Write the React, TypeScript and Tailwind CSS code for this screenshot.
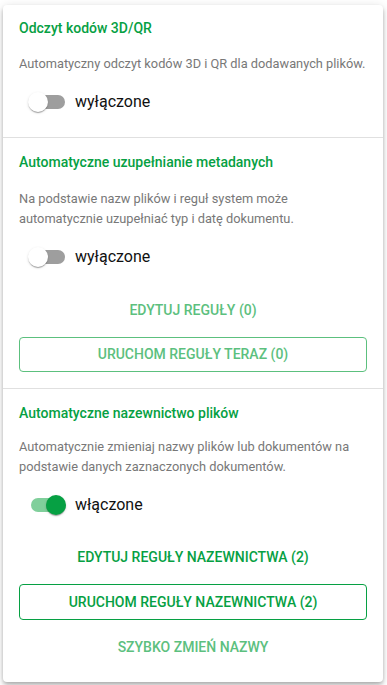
import React from "react";

const font = { fontFamily: "Roboto, 'Noto Sans', sans-serif" };

function Toggle({ on, label }: { on: boolean; label: string }) {
  return (
    <div className="flex items-center h-[38px]">
      <div className="relative w-[56px] h-[38px] flex items-center">
        <div
          className={
            on
              ? "absolute left-[12px] w-[34px] h-[14px] rounded-full bg-[#80cf9b]"
              : "absolute left-[12px] w-[34px] h-[14px] rounded-full bg-[#9e9e9e]"
          }
        />
        <div
          className={
            on
              ? "absolute left-[27px] w-[20px] h-[20px] rounded-full bg-[#06a043] shadow-[0_2px_1px_-1px_rgba(0,0,0,0.2),0_1px_1px_0_rgba(0,0,0,0.14),0_1px_3px_0_rgba(0,0,0,0.12)]"
              : "absolute left-[9px] w-[20px] h-[20px] rounded-full bg-white shadow-[0_2px_1px_-1px_rgba(0,0,0,0.2),0_1px_1px_0_rgba(0,0,0,0.14),0_1px_3px_0_rgba(0,0,0,0.12)]"
          }
        />
      </div>
      <span className="text-[16px] text-[#111] leading-[24px]">{label}</span>
    </div>
  );
}

export default function App() {
  return (
    <div className="w-[387px] h-[685px] bg-white overflow-hidden pt-[5px] pl-[3px]" style={font}>
      <div className="w-[380px] bg-white rounded-[4px] shadow-[0_2px_4px_-1px_rgba(0,0,0,0.2),0_4px_5px_0_rgba(0,0,0,0.14),0_1px_10px_0_rgba(0,0,0,0.12)] flex flex-col">
        {/* Section 1 */}
        <div className="px-4 pt-[13px] pb-[16px] flex flex-col">
          <div className="text-[14px] leading-[20px] font-medium text-[#06a043]">Odczyt kodów 3D/QR</div>
          <div className="mt-[16px] text-[12.8px] leading-[20px] text-[#787878] whitespace-nowrap">
            Automatyczny odczyt kodów 3D i QR dla dodawanych plików.
          </div>
          <div className="mt-[9px]">
            <Toggle on={false} label="wyłączone" />
          </div>
        </div>
        <div className="h-px bg-[#e0e0e0]" />
        {/* Section 2 */}
        <div className="px-4 pt-[14px] pb-[16px] flex flex-col">
          <div className="text-[14px] leading-[20px] font-medium text-[#06a043]">Automatyczne uzupełnianie metadanych</div>
          <div className="mt-[17px] text-[12.8px] leading-[20px] text-[#787878]">
            Na podstawie nazw plików i reguł system może automatycznie uzupełniać typ i datę dokumentu.
          </div>
          <div className="mt-[9px]">
            <Toggle on={false} label="wyłączone" />
          </div>
          <div className="mt-[16px] h-[36px] flex items-center justify-center text-[14px] font-medium uppercase text-[#5cc07e]">
            Edytuj reguły (0)
          </div>
          <div className="mt-[9px] h-[35px] rounded-[4px] border border-[#5cc07e] flex items-center justify-center text-[14px] font-medium uppercase text-[#5cc07e]">
            Uruchom reguły teraz (0)
          </div>
        </div>
        <div className="h-px bg-[#e0e0e0]" />
        {/* Section 3 */}
        <div className="px-4 pt-[14px] pb-[17px] flex flex-col">
          <div className="text-[14px] leading-[20px] font-medium text-[#06a043]">Automatyczne nazewnictwo plików</div>
          <div className="mt-[14px] text-[12.8px] leading-[20px] text-[#787878]">
            Automatycznie zmieniaj nazwy plików lub dokumentów na podstawie danych zaznaczonych dokumentów.
          </div>
          <div className="mt-[9px]">
            <Toggle on={true} label="włączone" />
          </div>
          <div className="mt-[15px] h-[36px] flex items-center justify-center text-[14px] font-medium uppercase text-[#06a043]">
            Edytuj reguły nazewnictwa (2)
          </div>
          <div className="mt-[9px] h-[36px] rounded-[4px] border border-[#06a043] flex items-center justify-center text-[14px] font-medium uppercase text-[#06a043]">
            Uruchom reguły nazewnictwa (2)
          </div>
          <div className="mt-[9px] h-[36px] flex items-center justify-center text-[14px] font-medium uppercase text-[#5cc07e]">
            Szybko zmień nazwy
          </div>
        </div>
      </div>
    </div>
  );
}
